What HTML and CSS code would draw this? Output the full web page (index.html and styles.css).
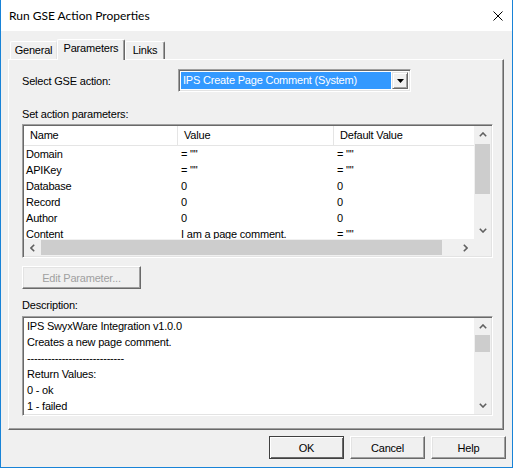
FILE: index.html
```html
<!DOCTYPE html>
<html lang="en">
<head>
    <meta charset="UTF-8">
    <title>Run GSE Action Properties</title>
    <link rel="stylesheet" href="styles.css">
</head>
<body>
    <div class="window">
        <div class="titlebar">
            <span class="title">Run GSE Action Properties</span>
            <svg class="close" width="10" height="10" viewBox="0 0 10 10">
                <path d="M0.5 0.5 L9.5 9.5 M9.5 0.5 L0.5 9.5" stroke="#000" stroke-width="1" fill="none"/>
            </svg>
        </div>

        <div class="client">
            <div class="tabs">
                <div class="tab tab-general">General</div>
                <div class="tab tab-params active">Parameters</div>
                <div class="tab tab-links">Links</div>
            </div>

            <div class="panel">
                <div class="action-row">
                    <label>Select GSE action:</label>
                    <div class="combo sunken">
                        <div class="combo-text">IPS Create Page Comment (System)</div>
                        <div class="combo-btn">
                            <svg width="7" height="4" viewBox="0 0 7 4"><polygon points="0,0 7,0 3.5,4" fill="#000"/></svg>
                        </div>
                    </div>
                </div>

                <div class="caption">Set action parameters:</div>
                <div class="listview sunken">
                    <div class="lv-top">
                        <div class="lv-body">
                            <div class="lv-header">
                                <div class="hcell col-name">Name</div>
                                <div class="hcell col-value">Value</div>
                                <div class="hcell col-default">Default Value</div>
                            </div>
                            <div class="lv-row"><span class="col-name">Domain</span><span class="col-value">= &quot;&quot;</span><span class="col-default">= &quot;&quot;</span></div>
                            <div class="lv-row"><span class="col-name">APIKey</span><span class="col-value">= &quot;&quot;</span><span class="col-default">= &quot;&quot;</span></div>
                            <div class="lv-row"><span class="col-name">Database</span><span class="col-value">0</span><span class="col-default">0</span></div>
                            <div class="lv-row"><span class="col-name">Record</span><span class="col-value">0</span><span class="col-default">0</span></div>
                            <div class="lv-row"><span class="col-name">Author</span><span class="col-value">0</span><span class="col-default">0</span></div>
                            <div class="lv-row"><span class="col-name">Content</span><span class="col-value">I am a page comment.</span><span class="col-default">= &quot;&quot;</span></div>
                        </div>
                        <div class="vscroll">
                            <div class="arrow"><svg width="8" height="5" viewBox="0 0 8 5"><polyline points="0.8,4.2 4,1 7.2,4.2" fill="none" stroke="#606060" stroke-width="1.6"/></svg></div>
                            <div class="track"><div class="thumb thumb-list"></div></div>
                            <div class="arrow"><svg width="8" height="5" viewBox="0 0 8 5"><polyline points="0.8,0.8 4,4 7.2,0.8" fill="none" stroke="#606060" stroke-width="1.6"/></svg></div>
                        </div>
                    </div>
                    <div class="hscroll">
                        <div class="arrow"><svg width="5" height="8" viewBox="0 0 5 8"><polyline points="4.2,0.8 1,4 4.2,7.2" fill="none" stroke="#606060" stroke-width="1.6"/></svg></div>
                        <div class="htrack"><div class="hthumb"></div></div>
                        <div class="arrow"><svg width="5" height="8" viewBox="0 0 5 8"><polyline points="0.8,0.8 4,4 0.8,7.2" fill="none" stroke="#606060" stroke-width="1.6"/></svg></div>
                        <div class="corner"></div>
                    </div>
                </div>

                <button class="btn btn-edit" disabled>Edit Parameter...</button>

                <div class="caption caption-desc">Description:</div>
                <div class="textbox sunken">
                    <div class="desc-text">
                        <div>IPS SwyxWare Integration v1.0.0</div>
                        <div>Creates a new page comment.</div>
                        <div>----------------------------</div>
                        <div>Return Values:</div>
                        <div>0 - ok</div>
                        <div>1 - failed</div>
                    </div>
                    <div class="vscroll">
                        <div class="arrow"><svg width="8" height="5" viewBox="0 0 8 5"><polyline points="0.8,4.2 4,1 7.2,4.2" fill="none" stroke="#606060" stroke-width="1.6"/></svg></div>
                        <div class="track"><div class="thumb thumb-desc"></div></div>
                        <div class="arrow"><svg width="8" height="5" viewBox="0 0 8 5"><polyline points="0.8,0.8 4,4 7.2,0.8" fill="none" stroke="#606060" stroke-width="1.6"/></svg></div>
                    </div>
                </div>
            </div>

            <div class="buttons">
                <button class="btn btn-default">OK</button>
                <button class="btn">Cancel</button>
                <button class="btn">Help</button>
            </div>
        </div>
    </div>
</body>
</html>
```

FILE: styles.css
```css
body {
    margin: 0;
    font-family: "Liberation Sans", Arial, sans-serif;
    font-size: 11px;
    letter-spacing: -0.2px;
    color: #000;
    background: #f0f0f0;
}
.window {
    width: 513px;
    height: 468px;
    box-sizing: border-box;
    border: 1px solid #1883d7;
    border-top: none;
    display: flex;
    flex-direction: column;
    background: #f0f0f0;
}
.titlebar {
    height: 31px;
    flex: none;
    background: #fff;
    display: flex;
    align-items: center;
    justify-content: space-between;
    padding: 0 9px 0 8px;
}
.title {
    font-family: Lato, "Noto Sans", sans-serif;
    font-size: 12px;
    letter-spacing: 0;
}
.close {
    display: block;
}
.client {
    flex: 1;
    display: flex;
    flex-direction: column;
    padding: 8px 8px 0 7px;
}

/* tabs */
.tabs {
    display: flex;
    align-items: flex-end;
    height: 20px;
    padding-left: 2px;
    position: relative;
    z-index: 1;
}
.tab {
    box-sizing: border-box;
    height: 18px;
    line-height: 17px;
    text-align: center;
    border: 1px solid;
    border-color: #fff #696969 transparent #fff;
    border-bottom: none;
    border-radius: 2px 2px 0 0;
    box-shadow: inset -1px 0 #a0a0a0;
    background: #f0f0f0;
}
.tab-general {
    width: 47px;
    border-right-color: #e3e3e3;
    box-shadow: none;
}
.tab-params {
    width: 68px;
}
.tab-links {
    width: 40px;
}
.tab.active {
    height: 21px;
    line-height: 16px;
    margin-bottom: -1px;
}

.panel {
    box-sizing: border-box;
    height: 371px;
    border: 1px solid;
    border-color: #fff #696969 #696969 #fff;
    box-shadow: inset -1px -1px #a0a0a0;
    padding: 9px 10px 0 13px;
    display: flex;
    flex-direction: column;
}
.sunken {
    box-sizing: border-box;
    border: 1px solid;
    border-color: #a0a0a0 #fff #fff #a0a0a0;
    padding: 1px;
    box-shadow: inset 1px 1px #696969, inset -1px -1px #e3e3e3;
    background: #fff;
}
.action-row {
    display: flex;
    align-items: center;
}
.action-row label {
    width: 156px;
}
.combo {
    width: 233px;
    height: 23px;
    display: flex;
    padding: 2px;
}
.combo-text {
    flex: 1;
    background: #3399ff;
    color: #fff;
    line-height: 17px;
    padding-left: 2px;
    margin-right: 1px;
}
.combo-btn {
    width: 16px;
    box-sizing: border-box;
    border: 1px solid;
    border-color: #e3e3e3 #696969 #696969 #e3e3e3;
    box-shadow: inset 1px 1px #fff, inset -1px -1px #a0a0a0;
    background: #f0f0f0;
    display: flex;
    align-items: center;
    justify-content: center;
}
.caption {
    margin-top: 16px;
    line-height: 13px;
}

/* list view */
.listview {
    margin-top: 3px;
    height: 134px;
    display: flex;
    flex-direction: column;
}
.lv-top {
    height: 113px;
    display: flex;
}
.lv-body {
    flex: 1;
    overflow: hidden;
}
.lv-header {
    height: 20px;
    box-sizing: border-box;
    border-bottom: 1px solid #e5e5e5;
    display: flex;
}
.hcell {
    box-sizing: border-box;
    line-height: 19px;
    padding-left: 6px;
    border-right: 1px solid #e5e5e5;
}
.col-name {
    width: 154px;
    flex: none;
}
.col-value {
    width: 156px;
    flex: none;
}
.col-default {
    flex: 1;
}
.hcell.col-default {
    border-right: none;
}
.lv-row {
    display: flex;
    height: 16px;
    line-height: 16px;
    white-space: nowrap;
}
.lv-row span {
    box-sizing: border-box;
    padding-left: 2px;
}
.lv-row .col-value,
.lv-row .col-default {
    padding-left: 3px;
}

/* scrollbars */
.vscroll {
    width: 17px;
    flex: none;
    background: #f0f0f0;
    display: flex;
    flex-direction: column;
}
.arrow {
    width: 17px;
    height: 17px;
    flex: none;
    display: flex;
    align-items: center;
    justify-content: center;
}
.track {
    flex: 1;
}
.thumb {
    background: #cdcdcd;
    margin: 0 1px;
}
.thumb-list {
    margin-top: 1px;
    height: 50px;
}
.thumb-desc {
    height: 17px;
}
.hscroll {
    height: 17px;
    display: flex;
    background: #f0f0f0;
}
.htrack {
    flex: 1;
    display: flex;
    align-items: center;
}
.hthumb {
    width: 401px;
    height: 15px;
    background: #cdcdcd;
}
.corner {
    width: 17px;
}

/* buttons */
.btn {
    box-sizing: border-box;
    width: 75px;
    height: 23px;
    padding: 0;
    font-family: inherit;
    font-size: 11px;
    letter-spacing: inherit;
    color: #000;
    background: #f0f0f0;
    border: 1px solid;
    border-color: #fff #696969 #696969 #fff;
    box-shadow: inset -1px -1px #a0a0a0, inset 1px 1px #e3e3e3;
}
.btn-edit {
    margin-top: 8px;
    width: 119px;
    align-self: flex-start;
    color: #a0a0a0;
}
.btn-default {
    border-color: #404040;
    box-shadow: inset 1px 1px #fff, inset -1px -1px #696969;
}
.caption-desc {
    margin-top: 10px;
}
.textbox {
    margin-top: 4px;
    height: 100px;
    display: flex;
}
.desc-text {
    flex: 1;
    padding: 0 0 0 3px;
    line-height: 16px;
    white-space: nowrap;
}
.buttons {
    display: flex;
    justify-content: flex-end;
    gap: 6px;
    margin-top: 6px;
    margin-right: -2px;
}
```
